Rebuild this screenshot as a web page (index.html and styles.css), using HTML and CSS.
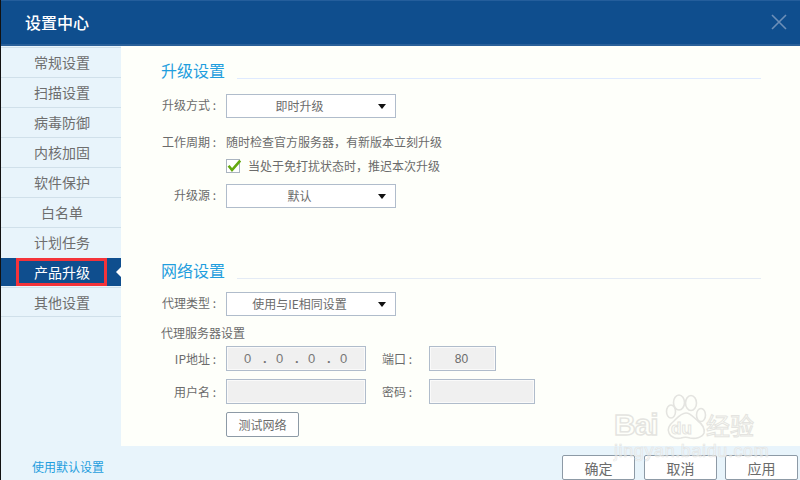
FILE: index.html
```html
<!DOCTYPE html>
<html lang="zh-CN">
<head>
<meta charset="utf-8">
<title>设置中心</title>
<link rel="stylesheet" href="styles.css">
</head>
<body>
<div class="window">
  <header class="titlebar">
    <h1 class="title">设置中心</h1>
    <svg class="close" width="16" height="16" viewBox="0 0 16 16"><path d="M1 1 15 15M15 1 1 15" stroke="#6d8fb8" stroke-width="1.6" fill="none"/></svg>
  </header>
  <div class="middle">
    <nav class="nav">
      <a class="nav-item">常规设置</a>
      <a class="nav-item">扫描设置</a>
      <a class="nav-item">病毒防御</a>
      <a class="nav-item">内核加固</a>
      <a class="nav-item">软件保护</a>
      <a class="nav-item">白名单</a>
      <a class="nav-item">计划任务</a>
      <a class="nav-item active">产品升级<span class="marker"></span><span class="highlight"></span></a>
      <a class="nav-item last">其他设置</a>
    </nav>
    <main class="content">
      <section class="section first">
        <div class="heading"><h2>升级设置</h2><span class="rule"></span></div>
        <div class="row r-mode"><span class="label raised">升级方式 :</span><div class="select">即时升级<i class="caret"></i></div></div>
        <div class="row r-cycle"><span class="label">工作周期 :</span><span class="text">随时检查官方服务器，有新版本立刻升级</span></div>
        <div class="row r-check">
          <span class="label"></span>
          <svg class="check" width="15" height="15" viewBox="0 0 15 15"><rect x=".5" y=".5" width="13" height="13" fill="#fff" stroke="#aab4c0"/><path d="M2.6 6.8 6 11 14.2 1.6" stroke="#63a80f" stroke-width="2.6" fill="none"/></svg>
          <span class="text after-check">当处于免打扰状态时，推迟本次升级</span>
        </div>
        <div class="row r-source"><span class="label raised">升级源 :</span><div class="select">默认<i class="caret"></i></div></div>
      </section>
      <section class="section second">
        <div class="heading"><h2>网络设置</h2><span class="rule"></span></div>
        <div class="row r-proxy"><span class="label raised">代理类型 :</span><div class="select">使用与IE相同设置<i class="caret"></i></div></div>
        <div class="row r-server"><span class="text">代理服务器设置</span></div>
        <div class="row r-ip">
          <span class="label">IP地址 :</span>
          <div class="field ip"><span>0</span><b>.</b><span>0</span><b>.</b><span>0</span><b>.</b><span>0</span></div>
          <span class="label2">端口 :</span>
          <div class="field port">80</div>
        </div>
        <div class="row r-user">
          <span class="label">用户名 :</span>
          <div class="field user"></div>
          <span class="label2">密码 :</span>
          <div class="field pass"></div>
        </div>
        <div class="row r-test"><span class="label"></span><button class="btn test" type="button">测试网络</button></div>
      </section>
    </main>
  </div>
  <footer class="footer">
    <a class="reset">使用默认设置</a>
    <div class="actions">
      <button class="btn action" type="button">确定</button>
      <button class="btn action" type="button">取消</button>
      <button class="btn action" type="button">应用</button>
    </div>
  </footer>
  <div class="watermark">
    <span class="wm-bai">Bai</span>
    <svg class="paw" width="46" height="48" viewBox="0 0 46 48"><g fill="#fefffa" stroke="#e4e4e0" stroke-width="1.6"><ellipse cx="10" cy="18.5" rx="4.5" ry="6.5"/><ellipse cx="18" cy="9.5" rx="5.5" ry="7.5"/><ellipse cx="30" cy="10" rx="5.5" ry="7.5"/><ellipse cx="40" cy="22" rx="4.5" ry="6.5"/><path d="M25 20c-5 0-8 4-12 8-5 4-7 8-5 12 2 5 8 6 12 5 3-1 6-1 9 0 5 1 12 0 14-5 1-5-2-9-6-12-4-3-7-8-12-8z"/></g></svg>
    <span class="wm-du">du</span><span class="wm-cn">经验</span>
    <span class="wm-url">jingyan.baidu.com</span>
  </div>
</div>
</body>
</html>
```
FILE: styles.css
```css
* { box-sizing: border-box; }
html, body { margin: 0; padding: 0; }
body { width: 800px; height: 480px; overflow: hidden; }
.window {
  position: relative; width: 800px; height: 480px; display: flex; flex-direction: column;
  border-left: 1px solid #111; background: #e8f4fb; overflow: hidden;
  font-family: "Noto Sans CJK SC", "Liberation Sans", sans-serif; font-size: 12px; color: #6b6b6b;
}
.titlebar {
  height: 46px; flex: none; display: flex; align-items: center; justify-content: space-between;
  padding: 0 13px 2px 24px; background: #0f4e8e; border-top: 1px solid #245e9c; border-bottom: 2px solid #2a6099;
}
.title { margin: 0; font-size: 16px; font-weight: 500; color: #fff; line-height: 20px; }
.close { display: block; }
.middle { height: 400px; flex: none; display: flex; }
.nav { width: 120px; flex: none; padding-top: 1px; display: flex; flex-direction: column; }
.nav-item {
  position: relative; height: 30px; display: flex; align-items: center; justify-content: center;
  border-top: 1px solid #d0e0ea; font-size: 14px; color: #6e6e6e; padding: 0 0 2px 2px;
}
.nav-item.active { background: #0f4e8e; color: #fff; border-top-color: #e8f4fb; border-bottom: 1px solid #e8f4fb; padding-bottom: 0; }
.nav-item.last { border-bottom: 1px solid #d0e0ea; padding-bottom: 0; }
.marker { position: absolute; right: 0; top: 9px; border: 5px solid transparent; border-left-width: 0; border-right: 5px solid #fff; }
.highlight { position: absolute; left: 15px; top: 0; width: 91px; height: 28px; border: 3px solid #f4333a; }
.content { flex: 1; background: #fefffa; padding: 0 39px 0 40px; }
.section.first { padding-top: 12px; }
.heading { display: flex; align-items: flex-end; height: 22px; gap: 12px; }
.heading h2 { margin: 0; font-size: 16px; font-weight: 400; color: #1f9ede; line-height: 20px; }
.rule { flex: 1; height: 1px; margin-bottom: 1px; background: #dfeaff; }
.second .rule { background: #e4ebf5; }
.row { display: flex; align-items: center; }
.label { width: 55px; margin-right: 10px; text-align: right; flex: none; white-space: nowrap; }
.label.raised { position: relative; top: -2px; }
.label2 { width: 47px; margin-left: 16px; flex: none; white-space: nowrap; }
.r-mode { margin-top: 14px; height: 24px; }
.r-cycle { margin-top: 13px; height: 20px; }
.r-check { margin-top: 7px; height: 16px; }
.after-check { margin-left: 7px; position: relative; top: -1px; }
.check { display: block; flex: none; }
.r-source { margin-top: 10px; height: 24px; }
.second { margin-top: 50px; }
.r-proxy { margin-top: 12px; height: 24px; }
.r-server { margin-top: 7px; height: 18px; }
.r-ip { margin-top: 5px; height: 25px; }
.r-user { margin-top: 8px; height: 25px; }
.r-test { margin-top: 8px; height: 25px; }
.select {
  position: relative; width: 170px; height: 24px; background: #fff; border: 1px solid #b0bccb;
  display: flex; align-items: center; justify-content: center; padding: 0 23px 2px 0; color: #6b6b6b;
}
.caret { position: absolute; right: 9px; top: 9px; border: 4px solid transparent; border-top: 5px solid #111; border-bottom: 0; }
.field { height: 25px; background: #f0f0f0; border: 1px solid #b0bccb; box-shadow: inset 0 0 0 1px #fafafa; display: flex; align-items: center; }
.field.ip { width: 140px; padding-left: 17px; font-family: "Liberation Sans", sans-serif; font-size: 13px; color: #777; }
.field.ip span { width: 19px; }
.field.ip b { width: 13px; font-weight: 700; }
.field.port { width: 67px; justify-content: center; padding-right: 2px; font-family: "Liberation Sans", sans-serif; }
.field.user { width: 140px; }
.field.pass { width: 106px; }
.btn {
  background: #fff; border: 1px solid #8d9aa6; border-radius: 2px; color: #6b6b6b; padding: 0;
  font-family: inherit; font-size: 12px;
}
.btn.test { width: 73px; height: 25px; }
.footer { height: 34px; flex: none; display: flex; justify-content: space-between; padding: 9px 2px 0 31px; position: relative; }
.reset { color: #1f9ede; line-height: 24px; font-size: 12px; }
.actions { display: flex; gap: 8px; }
.btn.action { width: 73px; height: 25px; font-size: 14px; }
.btn.action:first-child { margin-right: 1px; }
.watermark { position: absolute; left: 0; top: 0; width: 800px; height: 480px; pointer-events: none; font-family: "Liberation Sans", sans-serif; }
.paw { position: absolute; left: 660px; top: 393px; }
.watermark span { position: absolute; color: #fefffa; -webkit-text-stroke: 1.4px #e4e4e0; white-space: nowrap; }
.watermark .wm-bai { left: 613px; top: 408px; font-size: 30px; font-weight: 700; line-height: 34px; letter-spacing: -1px; }
.watermark .wm-du { left: 670px; top: 419px; font-size: 17px; font-weight: 700; line-height: 20px; -webkit-text-stroke: 1px #e4e4e0; }
.watermark .wm-cn { left: 705px; top: 412px; font-size: 24px; line-height: 26px; font-family: "Noto Sans CJK SC", sans-serif; -webkit-text-stroke: 1px #e4e4e0; }
.watermark .wm-url { left: 613px; top: 444px; font-size: 18px; line-height: 15px; color: rgba(255,255,255,.35); -webkit-text-stroke: .7px rgba(225,225,222,.85); letter-spacing: .6px; }
```
